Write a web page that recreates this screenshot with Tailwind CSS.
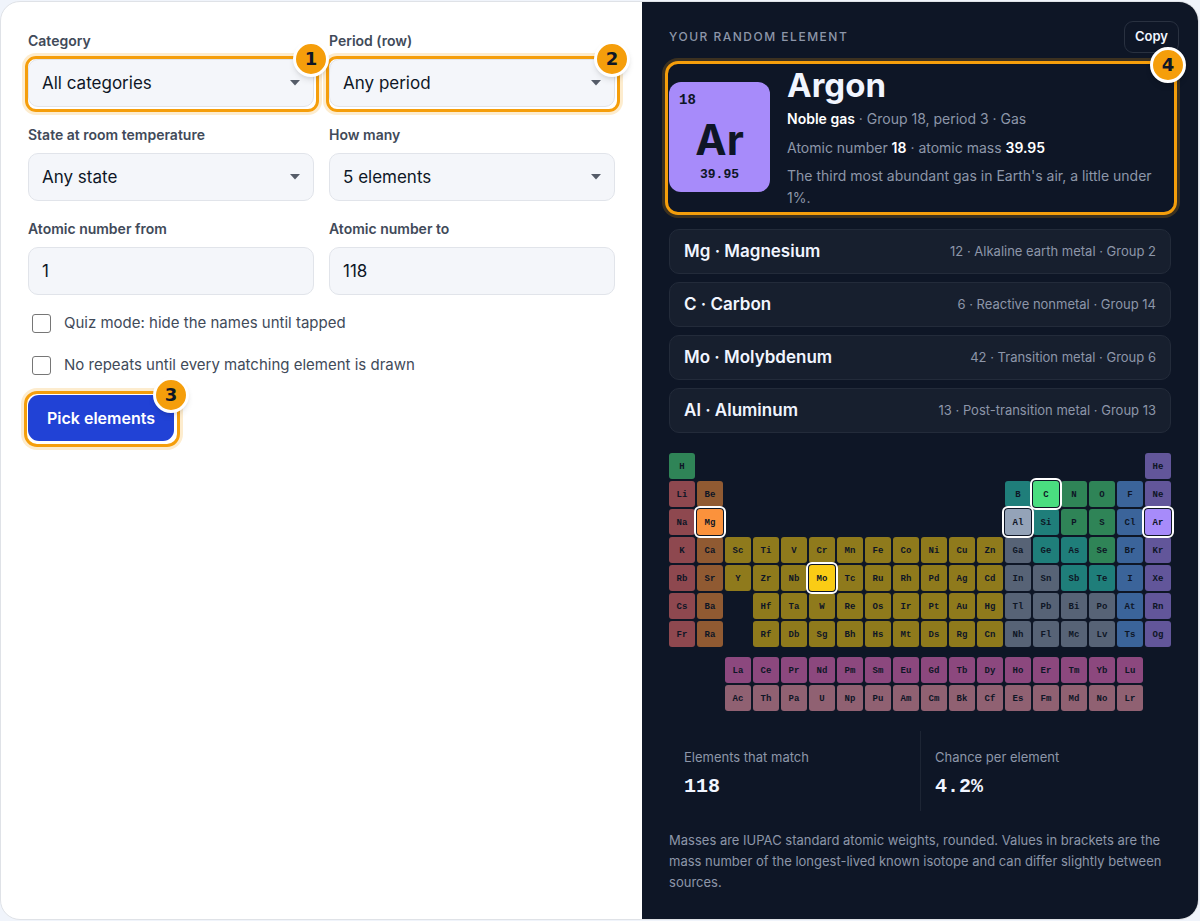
<!DOCTYPE html>
<html lang="en">

<head>
    <meta charset="UTF-8">
    <meta name="viewport" content="width=device-width, initial-scale=1.0">
    <title>Random Element Picker</title>
    <script src="https://cdn.jsdelivr.net/npm/@tailwindcss/browser@4"></script>
</head>

<body class="bg-[#f0f4fb] min-h-screen font-['Inter',sans-serif] text-[#0e1626]">
    <main class="grid grid-cols-[1.153fr_1fr] mt-px mr-px rounded-[20px] border border-[#dfe2e7] bg-white overflow-hidden">

        <!-- Options -->
        <form class="px-[27px] pt-[29px]" onsubmit="return false">
            <div class="grid grid-cols-2 gap-x-[15px] gap-y-[18px]">
                <div>
                    <label for="category" class="block text-sm font-semibold text-[#414a59]">Category</label>
                    <div class="relative mt-2">
                        <select id="category" class="appearance-none w-full h-12 rounded-[10px] border border-[#e1e4ea] bg-[#f4f6fa] px-[13px] pt-[2px] text-[17px]">
                            <option>All categories</option>
                        </select>
                        <svg class="absolute right-[14px] top-[21px] w-[10px] h-[6px] fill-[#555c68] pointer-events-none" viewBox="0 0 10 6"><path d="M0 0h10L5 5.5z" /></svg>
                        <div class="absolute -top-[3px] -left-[3px] -right-[5px] -bottom-[5px] rounded-[11px] border-3 border-[#f59e0b] ring-3 ring-[#f59e0b]/20 pointer-events-none"></div>
                        <span class="absolute z-10 -top-[18px] -right-[15px] flex items-center justify-center size-9 rounded-full border-3 border-white bg-[#f59e0b] shadow-md font-['DejaVu_Sans',sans-serif] text-lg font-bold">1</span>
                    </div>
                </div>
                <div>
                    <label for="period" class="block text-sm font-semibold text-[#414a59]">Period (row)</label>
                    <div class="relative mt-2">
                        <select id="period" class="appearance-none w-full h-12 rounded-[10px] border border-[#e1e4ea] bg-[#f4f6fa] px-[13px] pt-[2px] text-[17px]">
                            <option>Any period</option>
                        </select>
                        <svg class="absolute right-[14px] top-[21px] w-[10px] h-[6px] fill-[#555c68] pointer-events-none" viewBox="0 0 10 6"><path d="M0 0h10L5 5.5z" /></svg>
                        <div class="absolute -top-[3px] -left-[3px] -right-[5px] -bottom-[5px] rounded-[11px] border-3 border-[#f59e0b] ring-3 ring-[#f59e0b]/20 pointer-events-none"></div>
                        <span class="absolute z-10 -top-[18px] -right-[15px] flex items-center justify-center size-9 rounded-full border-3 border-white bg-[#f59e0b] shadow-md font-['DejaVu_Sans',sans-serif] text-lg font-bold">2</span>
                    </div>
                </div>
                <div>
                    <label for="state" class="block text-sm font-semibold text-[#414a59]">State at room temperature</label>
                    <div class="relative mt-2">
                        <select id="state" class="appearance-none w-full h-12 rounded-[10px] border border-[#e1e4ea] bg-[#f4f6fa] px-[13px] pt-[2px] text-[17px]">
                            <option>Any state</option>
                        </select>
                        <svg class="absolute right-[14px] top-[21px] w-[10px] h-[6px] fill-[#555c68] pointer-events-none" viewBox="0 0 10 6"><path d="M0 0h10L5 5.5z" /></svg>
                    </div>
                </div>
                <div>
                    <label for="count" class="block text-sm font-semibold text-[#414a59]">How many</label>
                    <div class="relative mt-2">
                        <select id="count" class="appearance-none w-full h-12 rounded-[10px] border border-[#e1e4ea] bg-[#f4f6fa] px-[13px] pt-[2px] text-[17px]">
                            <option>5 elements</option>
                        </select>
                        <svg class="absolute right-[14px] top-[21px] w-[10px] h-[6px] fill-[#555c68] pointer-events-none" viewBox="0 0 10 6"><path d="M0 0h10L5 5.5z" /></svg>
                    </div>
                </div>
                <div>
                    <label for="from" class="block text-sm font-semibold text-[#414a59]">Atomic number from</label>
                    <input id="from" type="text" inputmode="numeric" value="1" class="mt-2 w-full h-12 rounded-[10px] border border-[#e1e4ea] bg-[#f4f6fa] px-[13px] text-[17px]">
                </div>
                <div>
                    <label for="to" class="block text-sm font-semibold text-[#414a59]">Atomic number to</label>
                    <input id="to" type="text" inputmode="numeric" value="118" class="mt-2 w-full h-12 rounded-[10px] border border-[#e1e4ea] bg-[#f4f6fa] px-[13px] text-[17px]">
                </div>
            </div>

            <div class="mt-4 ml-1 flex flex-col gap-[18px] text-[15px] leading-6 text-[#414a59]">
                <label class="flex items-center gap-[13px]">
                    <input type="checkbox" class="appearance-none size-[19px] rounded-[3px] border border-[#767676] bg-white checked:bg-[#2142d6]">
                    Quiz mode: hide the names until tapped
                </label>
                <label class="flex items-center gap-[13px]">
                    <input type="checkbox" class="appearance-none size-[19px] rounded-[3px] border border-[#767676] bg-white checked:bg-[#2142d6]">
                    No repeats until every matching element is drawn
                </label>
            </div>

            <div class="relative inline-block mt-[18px]">
                <button type="submit" class="block h-[46px] px-[19px] rounded-[11px] bg-[#2142d6] text-base font-semibold text-white">Pick elements</button>
                <div class="absolute -top-[4px] -left-[4px] -right-[6px] -bottom-[6px] rounded-[13px] border-3 border-[#f59e0b] ring-3 ring-[#f59e0b]/20 pointer-events-none"></div>
                <span class="absolute -top-[18px] -right-[15px] flex items-center justify-center size-9 rounded-full border-3 border-white bg-[#f59e0b] shadow-md font-['DejaVu_Sans',sans-serif] text-lg font-bold">3</span>
            </div>
        </form>

        <!-- Result -->
        <section class="bg-[#0e1626] px-[27px] pt-[19px] pb-[26px]">
            <div class="flex items-center justify-between">
                <h2 class="text-xs font-medium tracking-[1.5px] uppercase text-[#8d96a9]">Your random element</h2>
                <button type="button" class="-mr-2 h-8 px-[10px] rounded-[9px] border border-[#293140] text-[13px] font-semibold text-[#f1f5ff]">Copy</button>
            </div>

            <div class="relative mt-3 flex items-center gap-[17px]">
                <div class="flex flex-col shrink-0 w-[101px] h-[110px] rounded-xl bg-[#a78bfa] px-[10px] py-[9px]">
                    <span class="font-['Liberation_Mono',monospace] text-sm leading-[18px] font-bold">18</span>
                    <span class="mt-[9px] text-center text-[42px] leading-[44px] font-bold">Ar</span>
                    <span class="mt-1 text-center font-['Liberation_Mono',monospace] text-[13px] leading-[18px] font-bold">39.95</span>
                </div>
                <div class="text-sm leading-[22px] text-[#8d96a9]">
                    <h1 class="text-[33px] leading-10 font-bold text-[#f1f5ff]">Argon</h1>
                    <p class="mt-[3px]"><strong class="font-semibold text-white">Noble gas</strong> · Group 18, period 3 · Gas</p>
                    <p class="mt-[7px]">Atomic number <strong class="font-semibold text-white">18</strong> · atomic mass <strong class="font-semibold text-white">39.95</strong></p>
                    <p class="mt-[6px]">The third most abundant gas in Earth's air, a little under 1%.</p>
                </div>
                <div class="absolute -top-[4px] -left-[4px] -right-[6px] -bottom-[6px] rounded-[13px] border-3 border-[#f59e0b] ring-3 ring-[#f59e0b]/20 pointer-events-none"></div>
                <span class="absolute -top-[18px] -right-[15px] flex items-center justify-center size-9 rounded-full border-3 border-white bg-[#f59e0b] shadow-md font-['DejaVu_Sans',sans-serif] text-lg font-bold">4</span>
            </div>

            <ul class="mt-5 flex flex-col gap-2">
                <li class="flex items-center justify-between h-[45px] px-[14px] rounded-[10px] border border-[#232b3a] bg-[#171f2e]">
                    <span class="text-[17px] font-semibold text-[#f1f5ff]">Mg · Magnesium</span>
                    <span class="text-[13px] text-[#8d96a9]">12 · Alkaline earth metal · Group 2</span>
                </li>
                <li class="flex items-center justify-between h-[45px] px-[14px] rounded-[10px] border border-[#232b3a] bg-[#171f2e]">
                    <span class="text-[17px] font-semibold text-[#f1f5ff]">C · Carbon</span>
                    <span class="text-[13px] text-[#8d96a9]">6 · Reactive nonmetal · Group 14</span>
                </li>
                <li class="flex items-center justify-between h-[45px] px-[14px] rounded-[10px] border border-[#232b3a] bg-[#171f2e]">
                    <span class="text-[17px] font-semibold text-[#f1f5ff]">Mo · Molybdenum</span>
                    <span class="text-[13px] text-[#8d96a9]">42 · Transition metal · Group 6</span>
                </li>
                <li class="flex items-center justify-between h-[45px] px-[14px] rounded-[10px] border border-[#232b3a] bg-[#171f2e]">
                    <span class="text-[17px] font-semibold text-[#f1f5ff]">Al · Aluminum</span>
                    <span class="text-[13px] text-[#8d96a9]">13 · Post-transition metal · Group 13</span>
                </li>
            </ul>

            <div id="periodic-table" class="mt-5 grid grid-cols-18 gap-[2px] font-['Liberation_Mono',monospace] text-[9px] font-bold"></div>

            <dl class="mt-5 grid grid-cols-2">
                <div class="px-[15px] pt-4 pb-[11px]">
                    <dt class="text-[13px] leading-5 text-[#8d96a9]">Elements that match</dt>
                    <dd class="mt-[7px] font-['Liberation_Mono',monospace] text-xl leading-[26px] font-bold text-[#f1f5ff]">118</dd>
                </div>
                <div class="px-[14px] pt-4 pb-[11px] border-l border-[#1d2534]">
                    <dt class="text-[13px] leading-5 text-[#8d96a9]">Chance per element</dt>
                    <dd class="mt-[7px] font-['Liberation_Mono',monospace] text-xl leading-[26px] font-bold text-[#f1f5ff]">4.2%</dd>
                </div>
            </dl>

            <p class="mt-[19px] text-[13px] leading-[21px] text-[#8d96a9]">Masses are IUPAC standard atomic weights, rounded. Values in brackets are the mass number of the longest-lived known isotope and can differ slightly between sources.</p>
        </section>
    </main>

    <script>
        const colors = {
            n: "bg-[#4ade80]", // reactive nonmetal
            a: "bg-[#f87171]", // alkali metal
            e: "bg-[#fb923c]", // alkaline earth metal
            t: "bg-[#facc15]", // transition metal
            p: "bg-[#94a3b8]", // post-transition metal
            m: "bg-[#2dd4bf]", // metalloid
            h: "bg-[#60a5fa]", // halogen
            g: "bg-[#a78bfa]", // noble gas
            l: "bg-[#f472c6]", // lanthanide
            c: "bg-[#fb9fb1]"  // actinide
        };

        // symbol:category, "." is an empty cell
        const rows = [
            "H:n . . . . . . . . . . . . . . . . He:g",
            "Li:a Be:e . . . . . . . . . . B:m C:n N:n O:n F:h Ne:g",
            "Na:a Mg:e . . . . . . . . . . Al:p Si:m P:n S:n Cl:h Ar:g",
            "K:a Ca:e Sc:t Ti:t V:t Cr:t Mn:t Fe:t Co:t Ni:t Cu:t Zn:t Ga:p Ge:m As:m Se:n Br:h Kr:g",
            "Rb:a Sr:e Y:t Zr:t Nb:t Mo:t Tc:t Ru:t Rh:t Pd:t Ag:t Cd:t In:p Sn:p Sb:m Te:m I:h Xe:g",
            "Cs:a Ba:e . Hf:t Ta:t W:t Re:t Os:t Ir:t Pt:t Au:t Hg:t Tl:p Pb:p Bi:p Po:p At:h Rn:g",
            "Fr:a Ra:e . Rf:t Db:t Sg:t Bh:t Hs:t Mt:t Ds:t Rg:t Cn:t Nh:p Fl:p Mc:p Lv:p Ts:h Og:g",
            "",
            ". . La:l Ce:l Pr:l Nd:l Pm:l Sm:l Eu:l Gd:l Tb:l Dy:l Ho:l Er:l Tm:l Yb:l Lu:l .",
            ". . Ac:c Th:c Pa:c U:c Np:c Pu:c Am:c Cm:c Bk:c Cf:c Es:c Fm:c Md:c No:c Lr:c ."
        ];

        const picked = ["Ar", "Mg", "C", "Mo", "Al"];
        const table = document.getElementById("periodic-table");
        let html = "";

        rows.forEach(row => {
            if (!row) {
                html += `<span class="col-span-full h-[6px]"></span>`;
                return;
            }
            row.split(" ").forEach(cell => {
                if (cell === ".") {
                    html += `<span></span>`;
                    return;
                }
                const [symbol, category] = cell.split(":");
                const state = picked.includes(symbol)
                    ? "z-10 outline-2 outline-offset-1 outline-white"
                    : "opacity-55";
                html += `<span class="flex items-center justify-center h-[26px] pt-[3px] rounded-[3px] ${colors[category]} ${state}">${symbol}</span>`;
            });
        });

        table.innerHTML = html;
    </script>
</body>

</html>
